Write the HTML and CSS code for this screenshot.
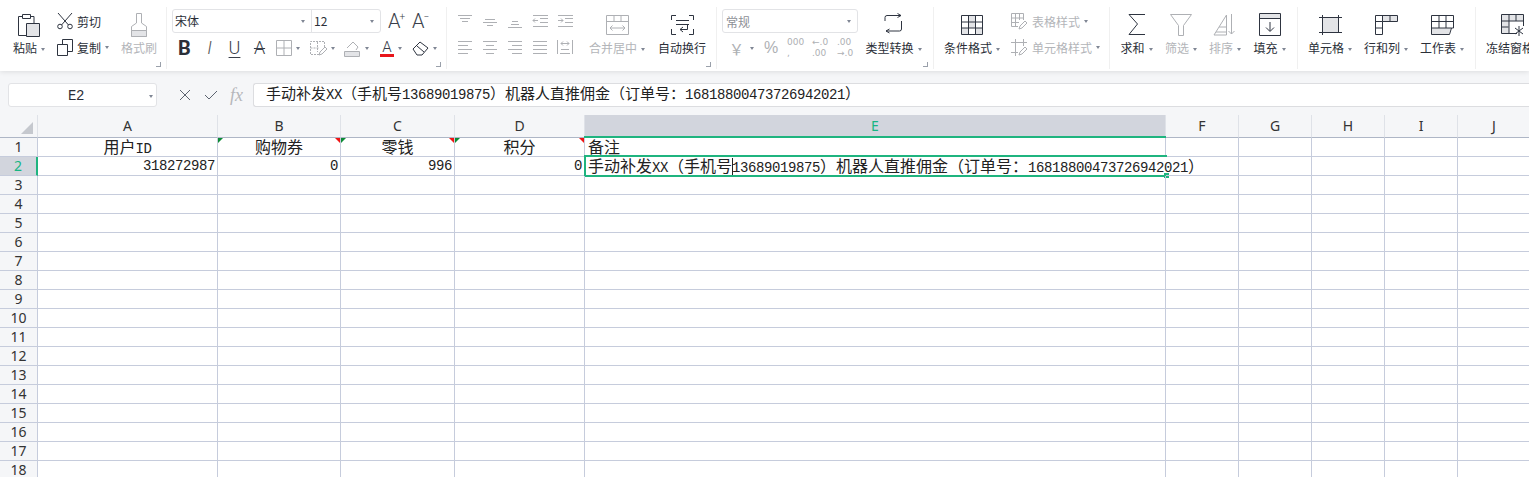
FILE: index.html
```html
<!DOCTYPE html>
<html lang="zh-CN">
<head>
    <meta charset="UTF-8">
    <title>工作簿</title>
    <link rel="stylesheet" href="styles.css">
</head>
<body>
    <div class="ribbon">
        <!-- 剪贴板 -->
        <div class="group g-clip">
            <div class="big w32">
                <div class="ic"><svg width="22" height="24" viewBox="0 0 22 24"><path class="dk" d="M9 22.500H.5V3.500H4M13 3.500h3V10"/><path class="dk" d="M4.500 1.500h8v4h-8z"/><path class="dk fl" d="M8.500 10.500h13v13h-13z"/></svg></div>
                <div class="lbl">粘贴<i class="tri"></i></div>
            </div>
            <div class="small-col">
                <div class="row"><svg width="16" height="18" viewBox="0 0 16 18"><path class="dk" d="M1 1l10.500 12M15 1L4.500 13"/><circle class="dk" cx="3" cy="14.500" r="2.300"/><circle class="dk" cx="13" cy="14.500" r="2.300"/></svg><span class="txt-l">剪切</span></div>
                <div class="row"><svg width="16" height="17" viewBox="0 0 16 17"><path class="dk" d="M5.500 5V.5h10v12H11"/><path class="dk" d="M.5 5.500h10v11H.5z"/></svg><span class="txt-l">复制</span><i class="tri"></i></div>
            </div>
            <div class="big w36 off">
                <div class="ic"><svg width="18" height="25" viewBox="0 0 18 25"><path class="gy" d="M6.500 11V1.500h5V11l5 3.500v10H1.500v-10z"/><path class="gy fl" d="M1.500 18.500h15v6H1.500z"/></svg></div>
                <div class="lbl">格式刷</div>
            </div>
            <i class="launch"></i>
        </div>
        <!-- 字体 -->
        <div class="group g-font">
            <div class="col-font">
                <div class="font-top">
                    <div class="box font-box">
                        <span class="font-name">宋体<i class="tri"></i></span>
                        <span class="font-size">12<i class="tri"></i></span>
                    </div>
                    <span class="grow">A<sup>+</sup></span>
                    <span class="grow shrink">A<sup>−</sup></span>
                </div>
                <div class="font-tools">
                    <span class="fbtn f-b">B</span>
                    <span class="fbtn f-i">I</span>
                    <span class="fbtn f-u">U</span>
                    <span class="fbtn f-s">A</span>
                    <span class="tdrop"><svg width="16" height="16" viewBox="0 0 16 16"><path class="gy" d="M.5.500h15v15H.5zM8 .5v15M.5 8h15"/></svg><i class="tri"></i></span>
                    <span class="tdrop"><svg width="17" height="17" viewBox="0 0 17 17"><path class="gy" d="M9 14.500H.5V1.500h14V7M.5 8h8M7.500 2v10" stroke-dasharray="2 1"/><path class="gy" d="M9 15l1-3 5-5 2 2-5 5z"/></svg><i class="tri"></i></span>
                    <span class="tdrop"><svg width="17" height="17" viewBox="0 0 17 17"><path class="gy" d="M3 8l6-6 5 5-2 3"/><path class="gy fl" d="M.5 11.500h15v5H.5z"/></svg><i class="tri"></i></span>
                    <span class="tdrop f-color"><span class="color-a">A</span><i class="tri"></i></span>
                    <span class="tdrop f-erase"><svg width="17" height="15" viewBox="0 0 17 15"><path class="dk" d="M1 8l7-7 8 6-6 7H5z"/><path class="dk" d="M5 5l7 6"/></svg><i class="tri"></i></span>
                </div>
            </div>
            <i class="launch"></i>
        </div>
        <!-- 对齐 -->
        <div class="group g-align">
            <div class="align-grid">
                <svg width="16" height="16" viewBox="0 0 16 16"><path class="gy" d="M1 2.500h14M3 5.500h10M5 8.500h6"/></svg>
                <svg width="16" height="16" viewBox="0 0 16 16"><path class="gy" d="M3 6.500h10M1 9.500h14M5 12.500h6"/></svg>
                <svg width="16" height="16" viewBox="0 0 16 16"><path class="gy" d="M5 8.500h6M4 11.500h8M1 14.500h14"/></svg>
                <svg width="16" height="16" viewBox="0 0 16 16"><path class="gy" d="M1 2.500h15M8 5.500h8M8 9.500h8M1 13.500h15M6 7.500H1M3 5.500l-2 2 2 2"/></svg>
                <svg width="16" height="16" viewBox="0 0 16 16"><path class="gy" d="M1 2.500h15M8 5.500h8M8 9.500h8M1 13.500h15M1 7.500h5M4 5.500l2 2-2 2"/></svg>
                <svg width="16" height="16" viewBox="0 0 16 16"><path class="gy" d="M1 2.500h14M1 6.500h10M1 10.500h14M1 14.500h10"/></svg>
                <svg width="16" height="16" viewBox="0 0 16 16"><path class="gy" d="M1 2.500h14M4 6.500h8M1 10.500h14M4 14.500h8"/></svg>
                <svg width="16" height="16" viewBox="0 0 16 16"><path class="gy" d="M1 2.500h14M5 6.500h10M1 10.500h14M5 14.500h10"/></svg>
                <svg width="16" height="16" viewBox="0 0 16 16"><path class="gy" d="M1 2.500h14M1 6.500h14M1 10.500h14M1 14.500h14"/></svg>
                <svg width="16" height="16" viewBox="0 0 16 16"><path class="gy" d="M.5 1v14M15.500 1v14M4 10.500h8M3 14.500h10M4 4.500h8M6 2.500l-2 2 2 2M10 2.500l2 2-2 2"/></svg>
            </div>
            <div class="big w56 off">
                <div class="ic"><svg width="23" height="20" viewBox="0 0 23 20"><path class="gy" d="M.5.500h22v19H.5zM.5 6.500h22M8 .5v6M15 .5v6M4 13h15M6.500 10.500L4 13l2.500 2.500M16.500 10.500L19 13l-2.500 2.500"/></svg></div>
                <div class="lbl">合并居中<i class="tri"></i></div>
            </div>
            <div class="big w48">
                <div class="ic"><svg width="23" height="20" viewBox="0 0 23 20"><path class="dk" d="M.5 5V.5H5M18 .5h4.500V5M.5 14v5.500H5M22.500 14v5.500H18M5 5.500h13M5 9.500h13M9 14.500h7.500v-5M9 14.500l3-2.500M9 14.500l3 2.500"/></svg></div>
                <div class="lbl">自动换行</div>
            </div>
            <i class="launch"></i>
        </div>
        <!-- 数字 -->
        <div class="group g-num">
            <div class="col-num">
                <div class="box num-box"><span>常规</span><i class="tri"></i></div>
                <div class="num-tools">
                    <span class="ntool w35">￥<i class="tri"></i></span>
                    <span class="ntool w23 pct">%</span>
                    <span class="ntool w25 dec"><b>000</b><b>,</b></span>
                    <span class="ntool w25 dec"><b>←.0</b><b>.00</b></span>
                    <span class="ntool w25 dec"><b>.00</b><b>→.0</b></span>
                </div>
            </div>
            <div class="big w57">
                <div class="ic"><svg width="19" height="23" viewBox="0 0 19 23"><path class="dk" d="M1 8V4.500Q1 2.500 3 2.500h14M13.500 .5L17 2.500l-3.500 2M17.500 8v8q0 2-2 2H2M5.500 16L2 18l3.500 2"/></svg></div>
                <div class="lbl">类型转换<i class="tri"></i></div>
            </div>
            <i class="launch"></i>
        </div>
        <!-- 样式 -->
        <div class="group g-style">
            <div class="big w56">
                <div class="ic"><svg width="22" height="20" viewBox="0 0 22 20"><path class="fl nost" d="M7 7h7v6H7zM14 13h7v6h-7zM1 13h6v6H1zM8 1h6v6H8z"/><path class="dk" d="M.5.500h21v19H.5zM.5 7h21M.5 13h21M7.500.5v19M14.500 .5v19"/></svg></div>
                <div class="lbl">条件格式<i class="tri"></i></div>
            </div>
            <div class="small-col style-col">
                <div class="row off"><svg width="17" height="17" viewBox="0 0 17 17"><path class="gy" d="M7 13.500H.5V.5h12V7M.5 5h12M.5 9.500H8M4.500 .5v13M8.500 .5V7"/><path class="gy" d="M8 16l1-3 5-5 2 2-5 5z"/></svg><span class="txt-l">表格样式</span><i class="tri"></i></div>
                <div class="row off"><svg width="17" height="17" viewBox="0 0 17 17"><path class="gy" d="M4.500 0v17M12.500 0v7M0 3.500h16M0 13.500h7"/><path class="gy" d="M8 16l1-3 5-5 2 2-5 5z"/></svg><span class="txt-l">单元格样式</span><i class="tri"></i></div>
            </div>
        </div>
        <!-- 编辑 -->
        <div class="group g-edit">
            <div class="big w33">
                <div class="ic"><svg width="18" height="21" viewBox="0 0 18 21"><path class="dk" d="M17 .5H1L9.500 10 1 20.500h16"/></svg></div>
                <div class="lbl">求和<i class="tri"></i></div>
            </div>
            <div class="big w32 off">
                <div class="ic"><svg width="22" height="22" viewBox="0 0 22 22"><path class="gy" d="M.5.500h21l-8 11v10h-5v-10z"/></svg></div>
                <div class="lbl">筛选<i class="tri"></i></div>
            </div>
            <div class="big w32 off">
                <div class="ic"><svg width="24" height="22" viewBox="0 0 24 22"><path class="gy" d="M13.500 1L1 21h12.500zM3 18h10M6 13h7M18.500 0v20M15.500 17l3 3 3-3"/></svg></div>
                <div class="lbl">排序<i class="tri"></i></div>
            </div>
            <div class="big w33">
                <div class="ic"><svg width="22" height="23" viewBox="0 0 22 23"><path class="fl nost" d="M1 1h20v4H1z"/><path class="dk" d="M.5.500h21v22H.5zM.5 5.500h21M11 9v9M7 14.500l4 4 4-4"/></svg></div>
                <div class="lbl">填充<i class="tri"></i></div>
            </div>
        </div>
        <!-- 单元格 -->
        <div class="group g-cell">
            <div class="big w44">
                <div class="ic"><svg width="23" height="20" viewBox="0 0 23 20"><path class="fl nost" d="M3 3h17v14H3z"/><path class="dk" d="M0 2.500h23M0 17.500h23M3.500 0v20M19.500 0v17"/></svg></div>
                <div class="lbl">单元格<i class="tri"></i></div>
            </div>
            <div class="big w44">
                <div class="ic"><svg width="23" height="20" viewBox="0 0 23 20"><path class="fl nost" d="M8 1h14v6H8z"/><path class="dk" d="M.5.500h22v6H7.500v13h-7zM.5 6.500h7M.5 13h7M7.500 .5v6M15 .5v6"/></svg></div>
                <div class="lbl">行和列<i class="tri"></i></div>
            </div>
            <div class="big w44">
                <div class="ic"><svg width="23" height="20" viewBox="0 0 23 20"><path class="fl nost" d="M1 13h19l-2 6H1z"/><path class="dk" d="M.5 19.500V.5h22v12.500h-2l-2 6.500zM.5 6.500h22M.5 13h20M8 .5V13M15 .5V13"/></svg></div>
                <div class="lbl">工作表<i class="tri"></i></div>
            </div>
        </div>
        <!-- 冻结 -->
        <div class="group g-freeze">
            <div class="big w56">
                <div class="ic"><svg width="26" height="22" viewBox="0 0 26 22"><path class="fl nost" d="M1 1h7v18H1zM8 1h14v6H8z"/><path class="dk" d="M16 19.500H.5V.5h22V12M.5 7h22M.5 13h7M8 .5v19M15 .5V7M18 12v10M14 14l8 6M22 14l-8 6"/></svg></div>
                <div class="lbl">冻结窗格<i class="tri"></i></div>
            </div>
        </div>
    </div>

    <div class="formula-bar">
        <div class="box name-box"><span class="lat">E2</span><i class="tri"></i></div>
        <div class="fx-tools">
            <svg width="12" height="12" viewBox="0 0 12 12"><path class="md" d="M1 1l10 10M11 1L1 11"/></svg>
            <svg width="14" height="12" viewBox="0 0 14 12"><path class="md" d="M1 6l4 4 8-8"/></svg>
            <span class="fx">fx</span>
        </div>
        <div class="formula-input">手动补发<span class="lat">XX</span>（手机号<span class="lat">13689019875</span>）机器人直推佣金（订单号：<span class="lat">16818800473726942021</span>）</div>
    </div>

    <table class="sheet">
        <colgroup>
            <col class="c-row"><col class="c-a"><col class="c-b"><col class="c-c"><col class="c-d"><col class="c-e"><col class="c-std"><col class="c-std"><col class="c-std"><col class="c-std"><col class="c-std">
        </colgroup>
        <tr class="heads">
            <th class="corner"><i></i></th><th>A</th><th>B</th><th>C</th><th>D</th><th class="cur">E</th><th>F</th><th>G</th><th>H</th><th>I</th><th>J</th>
        </tr>
        <tr><th>1</th><td class="ctr"><div class="v">用户<span class="lat">ID</span></div></td><td class="ctr flag-g flag-r"><div class="v">购物券</div></td><td class="ctr flag-g flag-r"><div class="v">零钱</div></td><td class="ctr flag-g flag-r"><div class="v">积分</div></td><td class="sel-head"><div class="v">备注</div></td><td></td><td></td><td></td><td></td><td></td></tr>
        <tr><th class="cur-row">2</th><td class="num"><div class="v lat">318272987</div></td><td class="num"><div class="v lat">0</div></td><td class="num"><div class="v lat">996</div></td><td class="num"><div class="v lat">0</div></td><td class="sel-cell"><div class="v">手动补发<span class="lat">XX</span>（手机号<i class="cursor"></i><span class="lat">13689019875</span>）机器人直推佣金（订单号：<span class="lat">16818800473726942021</span>）</div><i class="handle"></i></td><td></td><td></td><td></td><td></td><td></td></tr>
        <tr><th>3</th><td></td><td></td><td></td><td></td><td></td><td></td><td></td><td></td><td></td><td></td></tr>
        <tr><th>4</th><td></td><td></td><td></td><td></td><td></td><td></td><td></td><td></td><td></td><td></td></tr>
        <tr><th>5</th><td></td><td></td><td></td><td></td><td></td><td></td><td></td><td></td><td></td><td></td></tr>
        <tr><th>6</th><td></td><td></td><td></td><td></td><td></td><td></td><td></td><td></td><td></td><td></td></tr>
        <tr><th>7</th><td></td><td></td><td></td><td></td><td></td><td></td><td></td><td></td><td></td><td></td></tr>
        <tr><th>8</th><td></td><td></td><td></td><td></td><td></td><td></td><td></td><td></td><td></td><td></td></tr>
        <tr><th>9</th><td></td><td></td><td></td><td></td><td></td><td></td><td></td><td></td><td></td><td></td></tr>
        <tr><th>10</th><td></td><td></td><td></td><td></td><td></td><td></td><td></td><td></td><td></td><td></td></tr>
        <tr><th>11</th><td></td><td></td><td></td><td></td><td></td><td></td><td></td><td></td><td></td><td></td></tr>
        <tr><th>12</th><td></td><td></td><td></td><td></td><td></td><td></td><td></td><td></td><td></td><td></td></tr>
        <tr><th>13</th><td></td><td></td><td></td><td></td><td></td><td></td><td></td><td></td><td></td><td></td></tr>
        <tr><th>14</th><td></td><td></td><td></td><td></td><td></td><td></td><td></td><td></td><td></td><td></td></tr>
        <tr><th>15</th><td></td><td></td><td></td><td></td><td></td><td></td><td></td><td></td><td></td><td></td></tr>
        <tr><th>16</th><td></td><td></td><td></td><td></td><td></td><td></td><td></td><td></td><td></td><td></td></tr>
        <tr><th>17</th><td></td><td></td><td></td><td></td><td></td><td></td><td></td><td></td><td></td><td></td></tr>
        <tr><th>18</th><td></td><td></td><td></td><td></td><td></td><td></td><td></td><td></td><td></td><td></td></tr>
    </table>
</body>
</html>
```

FILE: styles.css
```css
* {
    box-sizing: border-box;
}
html, body {
    height: 100%;
}
body {
    margin: 0;
    overflow: hidden;
    background-color: #fff;
    color: #2b2f38;
    font-family: "Noto Sans CJK SC", "Noto Sans", sans-serif;
    font-size: 12px;
}

/* ribbon */
.ribbon {
    display: flex;
    height: 71px;
    padding-top: 7px;
    background-color: #fff;
    box-shadow: 0 1px 5px rgba(0,0,0,0.1);
    position: relative;
    z-index: 2;
}
.group {
    display: flex;
    flex: none;
    height: 62px;
    border-right: 1px solid #f0f0f0;
    position: relative;
}
.g-clip { width: 167px; padding-left: 13px; gap: 12px; }
.g-font { width: 280px; padding-left: 5px; }
.g-align { width: 270px; padding-left: 10px; gap: 13px; }
.g-num { width: 217px; padding-left: 5px; gap: 7px; }
.g-style { width: 176px; padding-left: 10px; gap: 11px; }
.g-edit { width: 188px; padding-left: 10px; gap: 12px; }
.g-cell { width: 178px; padding-left: 10px; gap: 12px; }
.g-freeze { padding-left: 10px; border-right: none; }

.big {
    display: flex;
    flex-direction: column;
    align-items: center;
    flex: none;
    padding-top: 3px;
}
.ic {
    height: 29px;
    margin-bottom: 1px;
    display: flex;
    align-items: center;
    justify-content: center;
}
.lbl {
    height: 16px;
    line-height: 16px;
    white-space: nowrap;
}
.w32 { width: 32px; }
.w33 { width: 33px; }
.w36 { width: 36px; }
.w44 { width: 44px; }
.w48 { width: 48px; }
.w56 { width: 56px; }
.w57 { width: 57px; }
.off {
    color: #b3b5b9;
}
.tri {
    display: inline-block;
    width: 0;
    height: 0;
    margin-left: 4px;
    vertical-align: middle;
    border-left: 2.5px solid transparent;
    border-right: 2.5px solid transparent;
    border-top: 3px solid #7f8694;
}
.launch {
    position: absolute;
    right: 5px;
    bottom: 2px;
    width: 5px;
    height: 5px;
    border-right: 1px solid #9aa0aa;
    border-bottom: 1px solid #9aa0aa;
}

/* icon strokes */
svg {
    display: block;
    flex: none;
}
svg path, svg circle {
    fill: none;
    stroke-width: 1;
}
svg .dk { stroke: #2e3440; }
svg .gy { stroke: #aeb0b4; }
svg .md { stroke: #5c6370; }
svg .fl { fill: #e3e4e7; }
svg .nost { stroke: none; }

.small-col {
    display: flex;
    flex-direction: column;
    padding-top: 1px;
    flex: none;
}
.row {
    display: flex;
    align-items: center;
    height: 26px;
    white-space: nowrap;
}
.row .txt-l {
    margin-left: 4px;
}
.row .tri {
    margin-left: 4px;
}

/* font group */
.col-font {
    display: flex;
    flex-direction: column;
}
.font-top {
    display: flex;
    align-items: center;
    height: 24px;
    margin-top: 2px;
}
.box {
    background-color: #fff;
    border: 1px solid #e2e3e6;
    border-radius: 3px;
}
.font-box {
    display: flex;
    width: 209px;
    height: 24px;
    font-size: 12px;
}
.font-name, .font-size {
    display: flex;
    align-items: center;
    justify-content: space-between;
    padding: 0 6px 0 2px;
    line-height: 22px;
}
.font-name {
    width: 139px;
    border-right: 1px solid #e2e3e6;
}
.font-size {
    width: 68px;
}
.grow {
    margin-left: 7px;
    width: 18px;
    font-family: Roboto, sans-serif;
    font-size: 20px;
    line-height: 22px;
    font-weight: 300;
    color: #3a3f4a;
    white-space: nowrap;
}
.grow + .grow {
    margin-left: 6px;
}
.grow sup {
    font-size: 10px;
    line-height: 0;
    vertical-align: 8px;
    margin-left: -1px;
}
.font-tools {
    display: flex;
    align-items: center;
    height: 24px;
    margin-top: 3px;
}
.fbtn {
    width: 25px;
    text-align: center;
    font-family: Roboto, sans-serif;
    font-size: 18px;
    line-height: 22px;
    font-weight: 300;
    color: #3a3f4a;
}
.f-b { font-weight: 700; font-size: 20px; color: #2b2f38; }
.f-i { font-style: italic; color: #555; }
.f-u { text-decoration: underline; text-underline-offset: 3px; text-decoration-thickness: 1px; }
.f-s { text-decoration: line-through; text-decoration-thickness: 1px; margin-right: 4px; }
.tdrop {
    display: flex;
    align-items: center;
    width: 34px;
    flex: none;
}
.f-color {
    width: 32px;
    margin-left: 2px;
}
.color-a {
    width: 14px;
    text-align: center;
    font-family: Roboto, sans-serif;
    font-weight: 300;
    font-size: 15px;
    line-height: 14px;
    border-bottom: 3px solid #e8151b;
    color: #3a3f4a;
}

/* alignment group */
.align-grid {
    display: grid;
    grid-template-columns: repeat(5, 25px);
    grid-auto-rows: 26px;
    align-items: center;
    width: 119px;
    padding-top: 1px;
    flex: none;
}

/* number group */
.col-num {
    display: flex;
    flex-direction: column;
    width: 136px;
    flex: none;
}
.num-box {
    display: flex;
    align-items: center;
    justify-content: space-between;
    width: 136px;
    height: 24px;
    margin-top: 2px;
    padding: 0 6px 0 3px;
    color: #8d9096;
}
.num-tools {
    display: flex;
    align-items: center;
    height: 26px;
    margin-top: 2px;
    padding-left: 7px;
    color: #aeb0b4;
}
.ntool {
    flex: none;
    display: flex;
    align-items: center;
    font-family: "Liberation Sans", sans-serif;
}
.ntool:first-child {
    font-family: "Noto Sans CJK SC", sans-serif;
    font-size: 15px;
}
.ntool:first-child .tri {
    margin-left: 6px;
}
.w23 { width: 23px; }
.w25 { width: 25px; }
.w35 { width: 35px; }
.pct { font-size: 16px; }
.dec {
    flex-direction: column;
    font-family: "DejaVu Sans", sans-serif;
    font-size: 9px;
    line-height: 11px;
    align-items: flex-start;
}
.dec b {
    font-weight: 400;
    white-space: nowrap;
}

/* style group */
.style-col {
    color: #b3b5b9;
}

/* formula bar */
.formula-bar {
    display: flex;
    height: 44px;
    padding: 12px 0 8px 8px;
    background-color: #f5f6f8;
}
.name-box {
    display: flex;
    align-items: center;
    width: 149px;
    height: 24px;
    padding: 2px 3px 0 59px;
    justify-content: space-between;
    font-size: 14px;
}
.fx-tools {
    display: flex;
    align-items: center;
    width: 96px;
    padding-left: 22px;
    gap: 13px;
    flex: none;
}
.fx {
    font-family: "Liberation Serif", serif;
    font-style: italic;
    font-size: 18px;
    color: #b5b7bb;
    margin-left: -1px;
}
.formula-input {
    flex: 1;
    height: 24px;
    padding-left: 12px;
    background-color: #fff;
    border: 1px solid #dcdde0;
    border-right: none;
    border-radius: 3px 0 0 3px;
    font-size: 15px;
    line-height: 17px;
    color: #222;
    white-space: nowrap;
    overflow: hidden;
}
.lat {
    font-family: "Liberation Mono", monospace;
    font-size: 14px;
    letter-spacing: -0.4px;
}

/* sheet */
.sheet {
    table-layout: fixed;
    border-collapse: separate;
    border-spacing: 0;
    width: 1530px;
    color: #222;
}
.c-row { width: 38px; }
.c-a { width: 180px; }
.c-b { width: 123px; }
.c-c { width: 114px; }
.c-d { width: 130px; }
.c-e { width: 581px; }
.c-std { width: 73px; }
tr {
    height: 19px;
}
.heads {
    height: 23px;
}
th, td {
    padding: 0;
    height: 19px;
    border-right: 1px solid #c6ccdc;
    border-bottom: 1px solid #c6ccdc;
    font-size: 16px;
    line-height: 18px;
    font-weight: 400;
    white-space: nowrap;
}
th {
    background-color: #f5f6f8;
    font-family: "Noto Sans", sans-serif;
    font-size: 14px;
    color: #333;
    text-align: center;
    overflow: hidden;
}
.heads th {
    height: 23px;
    border-right-color: #dfe2e8;
    border-bottom-color: #aeb6c6;
}
.corner {
    position: relative;
}
.corner i {
    position: absolute;
    right: 4px;
    bottom: 3px;
    width: 0;
    height: 0;
    border-left: 12px solid transparent;
    border-bottom: 12px solid #c5c8ce;
}
th.cur, th.cur-row {
    background-color: #d2d5dd;
    color: #17b583;
}
th.cur-row {
    border-right: 2px solid #1fb47f;
}
td {
    position: relative;
    vertical-align: top;
    padding-left: 3px;
}
/* fixed box so mixed fonts can't push the row taller */
.v {
    height: 18px;
    line-height: 16px;
}
.ctr {
    text-align: center;
    padding-left: 0;
}
.num {
    text-align: right;
    padding: 0 2px 0 0;
}
.num .v {
    line-height: 19px;
}
/* comment and error marks on the header cells */
.flag-g::before {
    content: "";
    position: absolute;
    left: 0;
    top: 0;
    border-top: 5px solid #0b8a35;
    border-right: 5px solid transparent;
}
.flag-r::after {
    content: "";
    position: absolute;
    right: 0;
    top: 0;
    border-top: 5px solid #f01414;
    border-left: 5px solid transparent;
}
.sel-head::before {
    content: "";
    position: absolute;
    left: -1px;
    right: -1px;
    top: -2px;
    border-top: 2px solid #1fb47f;
}
.sel-cell {
    border-right: none;
    overflow: visible;
}
.sel-cell::before {
    content: "";
    position: absolute;
    left: -1px;
    right: -1px;
    top: -2px;
    bottom: -2px;
    border: 2px solid #1fb47f;
    border-right: none;
    pointer-events: none;
}
.cursor {
    display: inline-block;
    width: 1px;
    height: 17px;
    margin-right: -1px;
    vertical-align: -3px;
    background-color: #222;
}
.handle {
    position: absolute;
    right: -3px;
    bottom: -3px;
    width: 5px;
    height: 5px;
    background-color: #1fb47f;
}
```
